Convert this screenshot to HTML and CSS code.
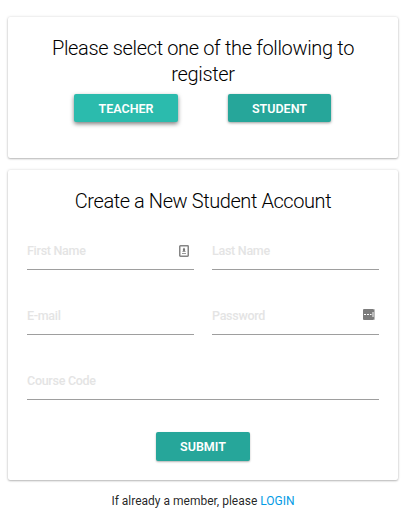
FILE: index.html
```html
<!DOCTYPE html>
<html lang="en">
<head>
<meta charset="utf-8">
<title>Register</title>
<link rel="stylesheet" href="styles.css">
</head>
<body>
<main class="page">
  <section class="card role-card">
    <h1 class="title">Please select one of the following to<br>register</h1>
    <div class="roles">
      <button class="btn btn-active" type="button">TEACHER</button>
      <button class="btn btn-student" type="button">STUDENT</button>
    </div>
  </section>
  <section class="card form-card">
    <h2 class="title form-title">Create a New Student Account</h2>
    <form class="form">
      <label class="field"><span>First Name</span>
        <svg class="contact-icon" width="10" height="12" viewBox="0 0 10 12"><rect x=".75" y=".75" width="8.5" height="10.5" rx=".7" fill="#fff" stroke="#858585" stroke-width="1.5"/><path d="M5 2.6 6.2 4.3 5.8 5.2 6.8 6.8H3.2L4.2 5.2 3.8 4.3Z" fill="#777"/><path d="M3 8.5h4" stroke="#999"/></svg>
      </label>
      <label class="field"><span>Last Name</span></label>
      <label class="field"><span>E-mail</span></label>
      <label class="field"><span>Password</span>
        <svg class="key-icon" width="12" height="11" viewBox="0 0 12 11"><rect width="11" height="11" rx="1" fill="#7c7c7c"/><path d="M9 3h2V0Q12 0 12 1V10Q12 11 11 11V8H9Z" fill="#bbb"/><path d="M1 5.5h2M4 5.5h2M7 5.5h1.5" stroke="#fff" stroke-width="1.2"/></svg>
      </label>
      <label class="field wide"><span>Course Code</span></label>
      <button class="btn submit" type="button">SUBMIT</button>
    </form>
  </section>
  <p class="login">If already a member, please <a>LOGIN</a></p>
</main>
</body>
</html>
```
FILE: styles.css
```css
* { box-sizing: border-box; }
body { margin: 0; background: #fff; font-family: Roboto, sans-serif; color: rgba(0,0,0,.87); }
.page { width: 418px; height: 522px; padding: 17px 20px 0 8px; overflow: hidden; }
.card { background: #fff; border-radius: 2px; box-shadow: 0 1px 2px rgba(0,0,0,.24), 0 0 3px rgba(0,0,0,.14); }
.role-card { height: 141px; padding-top: 18px; margin-bottom: 12px; }
.form-card { height: 310px; padding: 18px 19px 0; }
.title { margin: 0; font-size: 20px; line-height: 26px; font-weight: 300; letter-spacing: -.35px; text-align: center; color: #000; }
.form-title { letter-spacing: -.42px; }
.roles { display: flex; padding-left: 66px; gap: 50px; margin-top: 7px; }
.btn { width: 104px; height: 28px; padding: 1px 0 0; border: 0; border-radius: 2px; background: #26a69a; color: #fff; font: 600 12.5px/28px Roboto, sans-serif; box-shadow: 0 1px 3px rgba(0,0,0,.4); }
.btn-active { background: #2bbbad; box-shadow: 0 2px 4px rgba(0,0,0,.5); }
.btn-student { width: 103px; }
.form { display: grid; grid-template-columns: 167px 167px; column-gap: 18px; grid-auto-rows: 65px; margin-top: -10px; }
.field { display: flex; align-items: flex-end; justify-content: space-between; height: 66px; padding: 0 4px 9px 0; border-bottom: 1px solid #9e9e9e; font-size: 12.5px; line-height: 18px; font-weight: 500; letter-spacing: -.28px; color: #e4e4e4; }
.wide { grid-column: 1 / -1; }
.contact-icon { margin: 0 1px 3px 0; }
.key-icon { margin-bottom: 5px; }
.submit { grid-column: 1 / -1; justify-self: center; width: 94px; height: 29px; margin-top: 33px; box-shadow: 0 1px 2px rgba(0,0,0,.3); }
.login { margin: 12px 0 0; text-align: center; font-size: 12px; line-height: 18px; }
.login a { color: #039be5; }
```
